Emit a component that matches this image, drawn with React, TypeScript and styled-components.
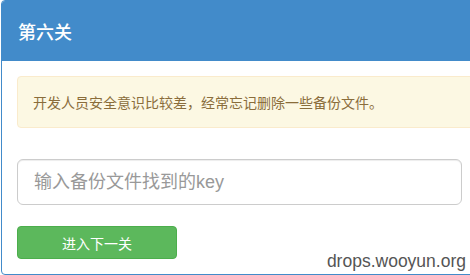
import React from "react";
import styled, { createGlobalStyle } from "styled-components";

const GlobalStyle = createGlobalStyle`
  html, body {
    margin: 0;
    padding: 0;
    background: #ffffff;
    font-family: "Liberation Sans", "Noto Sans CJK SC", sans-serif;
    overflow: hidden;
  }
  * { box-sizing: border-box; }
`;

const Page = styled.div`
  position: relative;
  width: 470px;
  height: 275px;
  overflow: hidden;
  padding-left: 1px;
`;

const Panel = styled.section`
  width: 490px;
  border: 1px solid #428bca;
  border-radius: 4px;
  background: #ffffff;
`;

const PanelHeading = styled.header`
  background: #428bca;
  color: #ffffff;
  padding: 20px 15px 19px 16px;
  border-top-left-radius: 3px;
  font-size: 18px;
  line-height: 21px;
  font-family: "Noto Sans CJK SC", sans-serif;
  font-weight: 500;
`;

const PanelBody = styled.div`
  padding: 15px;
  display: flex;
  flex-direction: column;
  align-items: flex-start;
`;

const Alert = styled.div`
  align-self: stretch;
  background: #fcf8e3;
  border: 1px solid #faebcc;
  border-radius: 4px;
  color: #8a6d3b;
  padding: 15px;
  font-size: 14px;
  line-height: 20px;
  font-family: "Noto Sans CJK SC", sans-serif;
`;

const KeyInput = styled.input`
  margin-top: 31px;
  width: 445px;
  height: 46px;
  padding: 10px 16px;
  font-size: 18px;
  line-height: 1.33;
  border: 1px solid #cccccc;
  border-radius: 6px;
  color: #555555;
  font-family: "Liberation Sans", "Noto Sans CJK SC", sans-serif;
  box-shadow: inset 0 1px 1px rgba(0, 0, 0, 0.075);
  outline: none;
  &::placeholder {
    color: #999999;
  }
`;

const NextButton = styled.button`
  margin-top: 21px;
  width: 160px;
  height: 33px;
  background: #5cb85c;
  border: 1px solid #4cae4c;
  border-radius: 4px;
  color: #ffffff;
  font-size: 14px;
  line-height: 20px;
  font-family: "Noto Sans CJK SC", sans-serif;
  cursor: pointer;
`;

const Watermark = styled.div`
  position: absolute;
  right: 3px;
  bottom: 3px;
  font-family: "Liberation Sans", Arial, sans-serif;
  font-size: 17.5px;
  color: #555555;
  background: rgba(255, 255, 255, 0.6);
  padding: 0 1px;
`;

export default function App() {
  return (
    <Page>
      <GlobalStyle />
      <Panel>
        <PanelHeading>第六关</PanelHeading>
        <PanelBody>
          <Alert>开发人员安全意识比较差，经常忘记删除一些备份文件。</Alert>
          <KeyInput placeholder="输入备份文件找到的key" />
          <NextButton>进入下一关</NextButton>
        </PanelBody>
      </Panel>
      <Watermark>drops.wooyun.org</Watermark>
    </Page>
  );
}
